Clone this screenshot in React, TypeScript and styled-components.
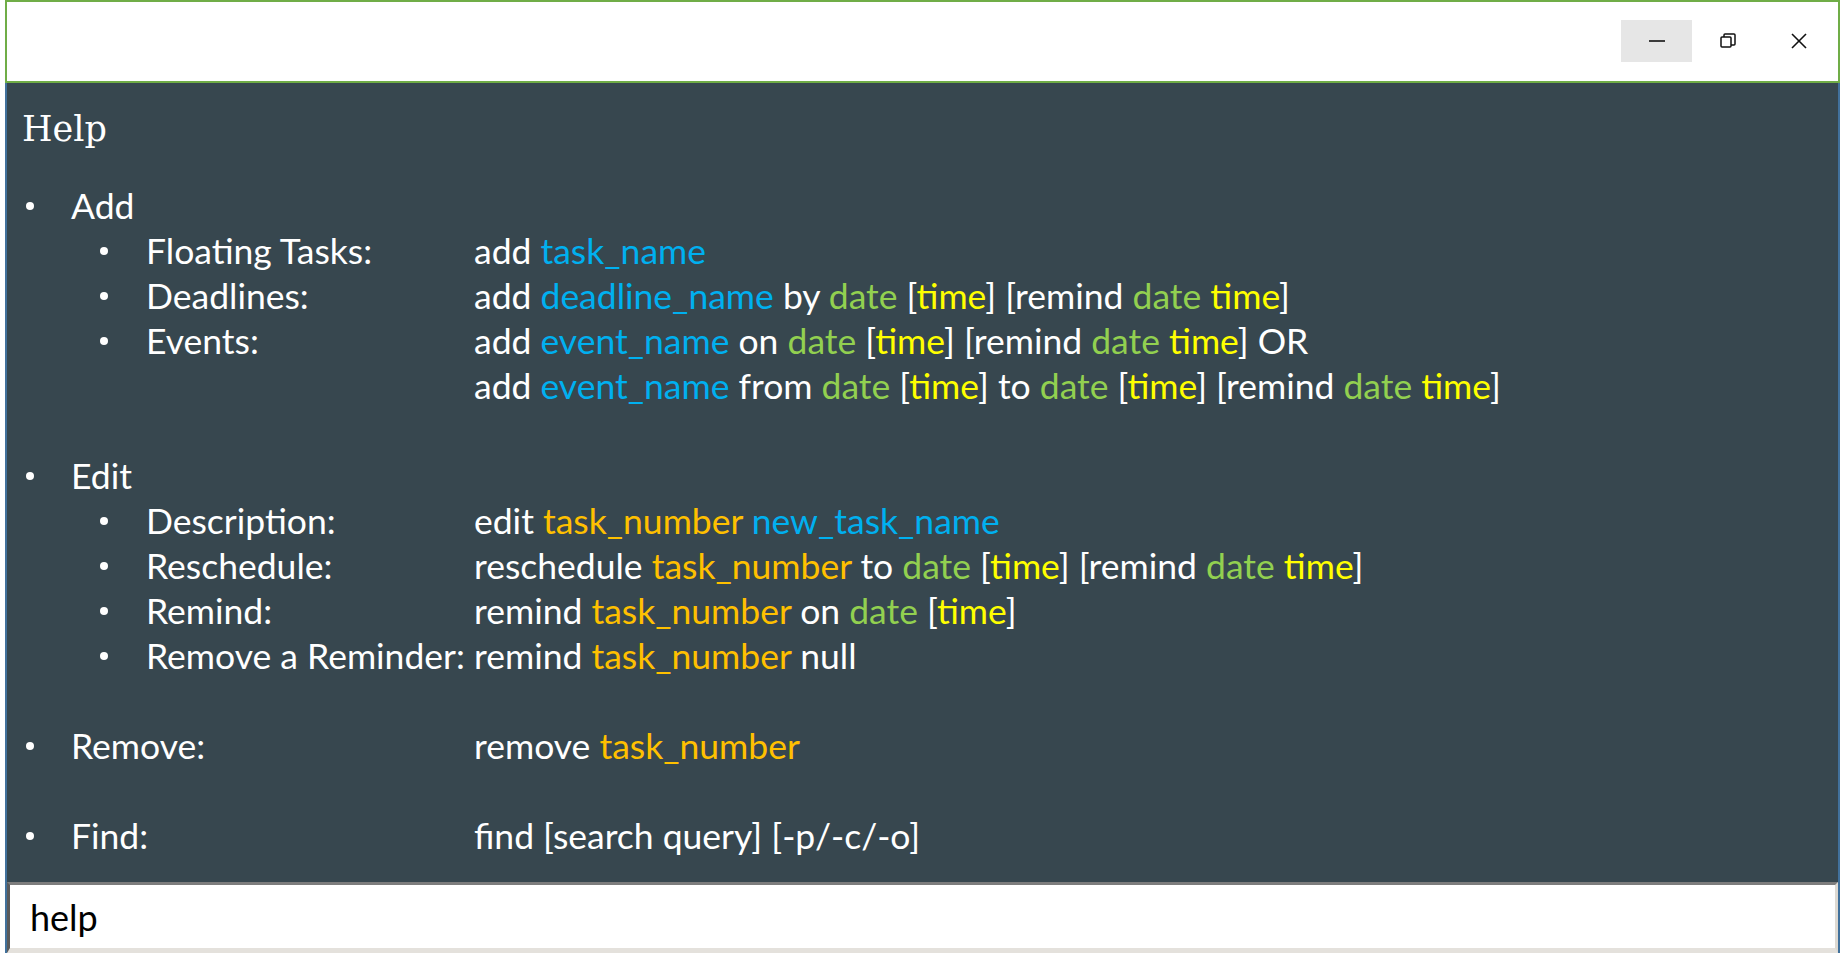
import React from "react";
import styled, { createGlobalStyle } from "styled-components";

type Tone = "b" | "g" | "y" | "o";

const toneColor: Record<Tone, string> = {
    b: "#00b0f0",
    g: "#92d050",
    y: "#ffff00",
    o: "#ffc000",
};

type Line = {
    level?: 1 | 2;
    label?: string;
    command?: string;
    blank?: boolean;
};

// command markup: {b:word} blue, {g:word} green, {y:word} yellow, {o:word} orange
const lines: Line[] = [
    { level: 1, label: "Add" },
    { level: 2, label: "Floating Tasks:", command: "add {b:task_name}" },
    {
        level: 2,
        label: "Deadlines:",
        command: "add {b:deadline_name} by {g:date} [{y:time}] [remind {g:date} {y:time}]",
    },
    {
        level: 2,
        label: "Events:",
        command: "add {b:event_name} on {g:date} [{y:time}] [remind {g:date} {y:time}] OR",
    },
    {
        command:
            "add {b:event_name} from {g:date} [{y:time}] to {g:date} [{y:time}] [remind {g:date} {y:time}]",
    },
    { blank: true },
    { level: 1, label: "Edit" },
    { level: 2, label: "Description:", command: "edit {o:task_number} {b:new_task_name}" },
    {
        level: 2,
        label: "Reschedule:",
        command: "reschedule {o:task_number} to {g:date} [{y:time}] [remind {g:date} {y:time}]",
    },
    { level: 2, label: "Remind:", command: "remind {o:task_number} on {g:date} [{y:time}]" },
    { level: 2, label: "Remove a Reminder:", command: "remind {o:task_number} null" },
    { blank: true },
    { level: 1, label: "Remove:", command: "remove {o:task_number}" },
    { blank: true },
    { level: 1, label: "Find:", command: "find [search query] [-p/-c/-o]" },
];

function renderCommand(text: string) {
    const parts: React.ReactNode[] = [];
    const re = /\{(\w):([^}]+)\}/g;
    let last = 0;
    let m: RegExpExecArray | null;
    let i = 0;
    while ((m = re.exec(text)) !== null) {
        if (m.index > last) parts.push(text.slice(last, m.index));
        parts.push(
            <Word key={i++} $tone={m[1] as Tone}>
                {m[2]}
            </Word>
        );
        last = m.index + m[0].length;
    }
    if (last < text.length) parts.push(text.slice(last));
    return parts;
}

export default function App() {
    return (
        <>
            <GlobalStyle />
            <Window>
                <TitleBar>
                    <WinButton $active>
                        <svg width="18" height="18" viewBox="0 0 18 18">
                            <line x1="1" y1="9" x2="17" y2="9" stroke="#111" strokeWidth="1.6" />
                        </svg>
                    </WinButton>
                    <WinButton>
                        <svg width="18" height="18" viewBox="0 0 18 18" fill="none" stroke="#111" strokeWidth="1.5">
                            <rect x="2" y="5" width="10" height="10" rx="1" />
                            <path d="M5 5 V3 a1 1 0 0 1 1 -1 H15 a1 1 0 0 1 1 1 V12 a1 1 0 0 1 -1 1 H12" />
                        </svg>
                    </WinButton>
                    <WinButton>
                        <svg width="18" height="18" viewBox="0 0 18 18" stroke="#111" strokeWidth="1.6">
                            <line x1="2" y1="2" x2="16" y2="16" />
                            <line x1="16" y1="2" x2="2" y2="16" />
                        </svg>
                    </WinButton>
                </TitleBar>
                <Panel>
                    <Content>
                        <Heading>Help</Heading>
                        <List>
                            {lines.map((line, idx) => (
                                <Row key={idx} $level={line.level ?? 2}>
                                    {line.blank ? null : (
                                        <>
                                            <Dot $hidden={!line.level} />
                                            <Label $level={line.level ?? 2}>{line.label}</Label>
                                            {line.command && <Command>{renderCommand(line.command)}</Command>}
                                        </>
                                    )}
                                </Row>
                            ))}
                        </List>
                    </Content>
                    <CommandBox>help</CommandBox>
                </Panel>
            </Window>
        </>
    );
}

const GlobalStyle = createGlobalStyle`
    html, body {
        margin: 0;
        padding: 0;
        background: #ffffff;
    }
    body {
        font-family: Lato, "Open Sans", sans-serif;
    }
`;

const Window = styled.div`
    margin-left: 5px;
    width: 1835px;
    height: 953px;
    display: flex;
    flex-direction: column;
`;

const TitleBar = styled.header`
    box-sizing: border-box;
    height: 83px;
    background: #ffffff;
    border: 2px solid #70ad47;
    display: flex;
    justify-content: flex-end;
    align-items: flex-start;
    padding: 18px 4px 0 0;
`;

const WinButton = styled.div<{ $active?: boolean }>`
    width: 71px;
    height: 42px;
    display: flex;
    align-items: center;
    justify-content: center;
    background: ${(p) => (p.$active ? "#e6e6e6" : "transparent")};
`;

const Panel = styled.main`
    flex: 1;
    display: flex;
    flex-direction: column;
    background: #37474f;
    border-left: 2px solid #41719c;
    border-right: 2px solid #41719c;
`;

const Content = styled.div`
    flex: 1;
    padding: 24px 0 0 0;
    color: #ffffff;
`;

const Heading = styled.h1`
    margin: 0 0 0 15px;
    height: 45px;
    line-height: 45px;
    font-family: "DejaVu Serif", serif;
    font-weight: 400;
    font-size: 35px;
    color: #ffffff;
`;

const List = styled.div`
    margin-top: 31px;
    font-size: 35.5px;
`;

const Row = styled.div<{ $level: 1 | 2 }>`
    height: 45px;
    display: flex;
    align-items: center;
    padding-left: ${(p) => (p.$level === 1 ? 19 : 93)}px;
    white-space: pre;
`;

const Dot = styled.span<{ $hidden?: boolean }>`
    width: 8px;
    height: 8px;
    border-radius: 50%;
    background: #ffffff;
    visibility: ${(p) => (p.$hidden ? "hidden" : "visible")};
    flex: none;
`;

const Label = styled.span<{ $level: 1 | 2 }>`
    flex: none;
    margin-left: ${(p) => (p.$level === 1 ? 37 : 38)}px;
    width: ${(p) => (p.$level === 1 ? 403 : 328)}px;
`;

const Command = styled.span`
    color: #ffffff;
`;

const Word = styled.span<{ $tone: Tone }>`
    color: ${(p) => toneColor[p.$tone]};
`;

const CommandBox = styled.div`
    box-sizing: border-box;
    height: 71px;
    background: #ffffff;
    border-top: 3px solid #7d7d7d;
    border-left: 3px solid #5a5a5a;
    border-right: 3px solid #ddd9d2;
    border-bottom: 5px solid #e4e1dc;
    padding-left: 20px;
    display: flex;
    align-items: center;
    font-size: 36px;
    color: #000000;
`;
